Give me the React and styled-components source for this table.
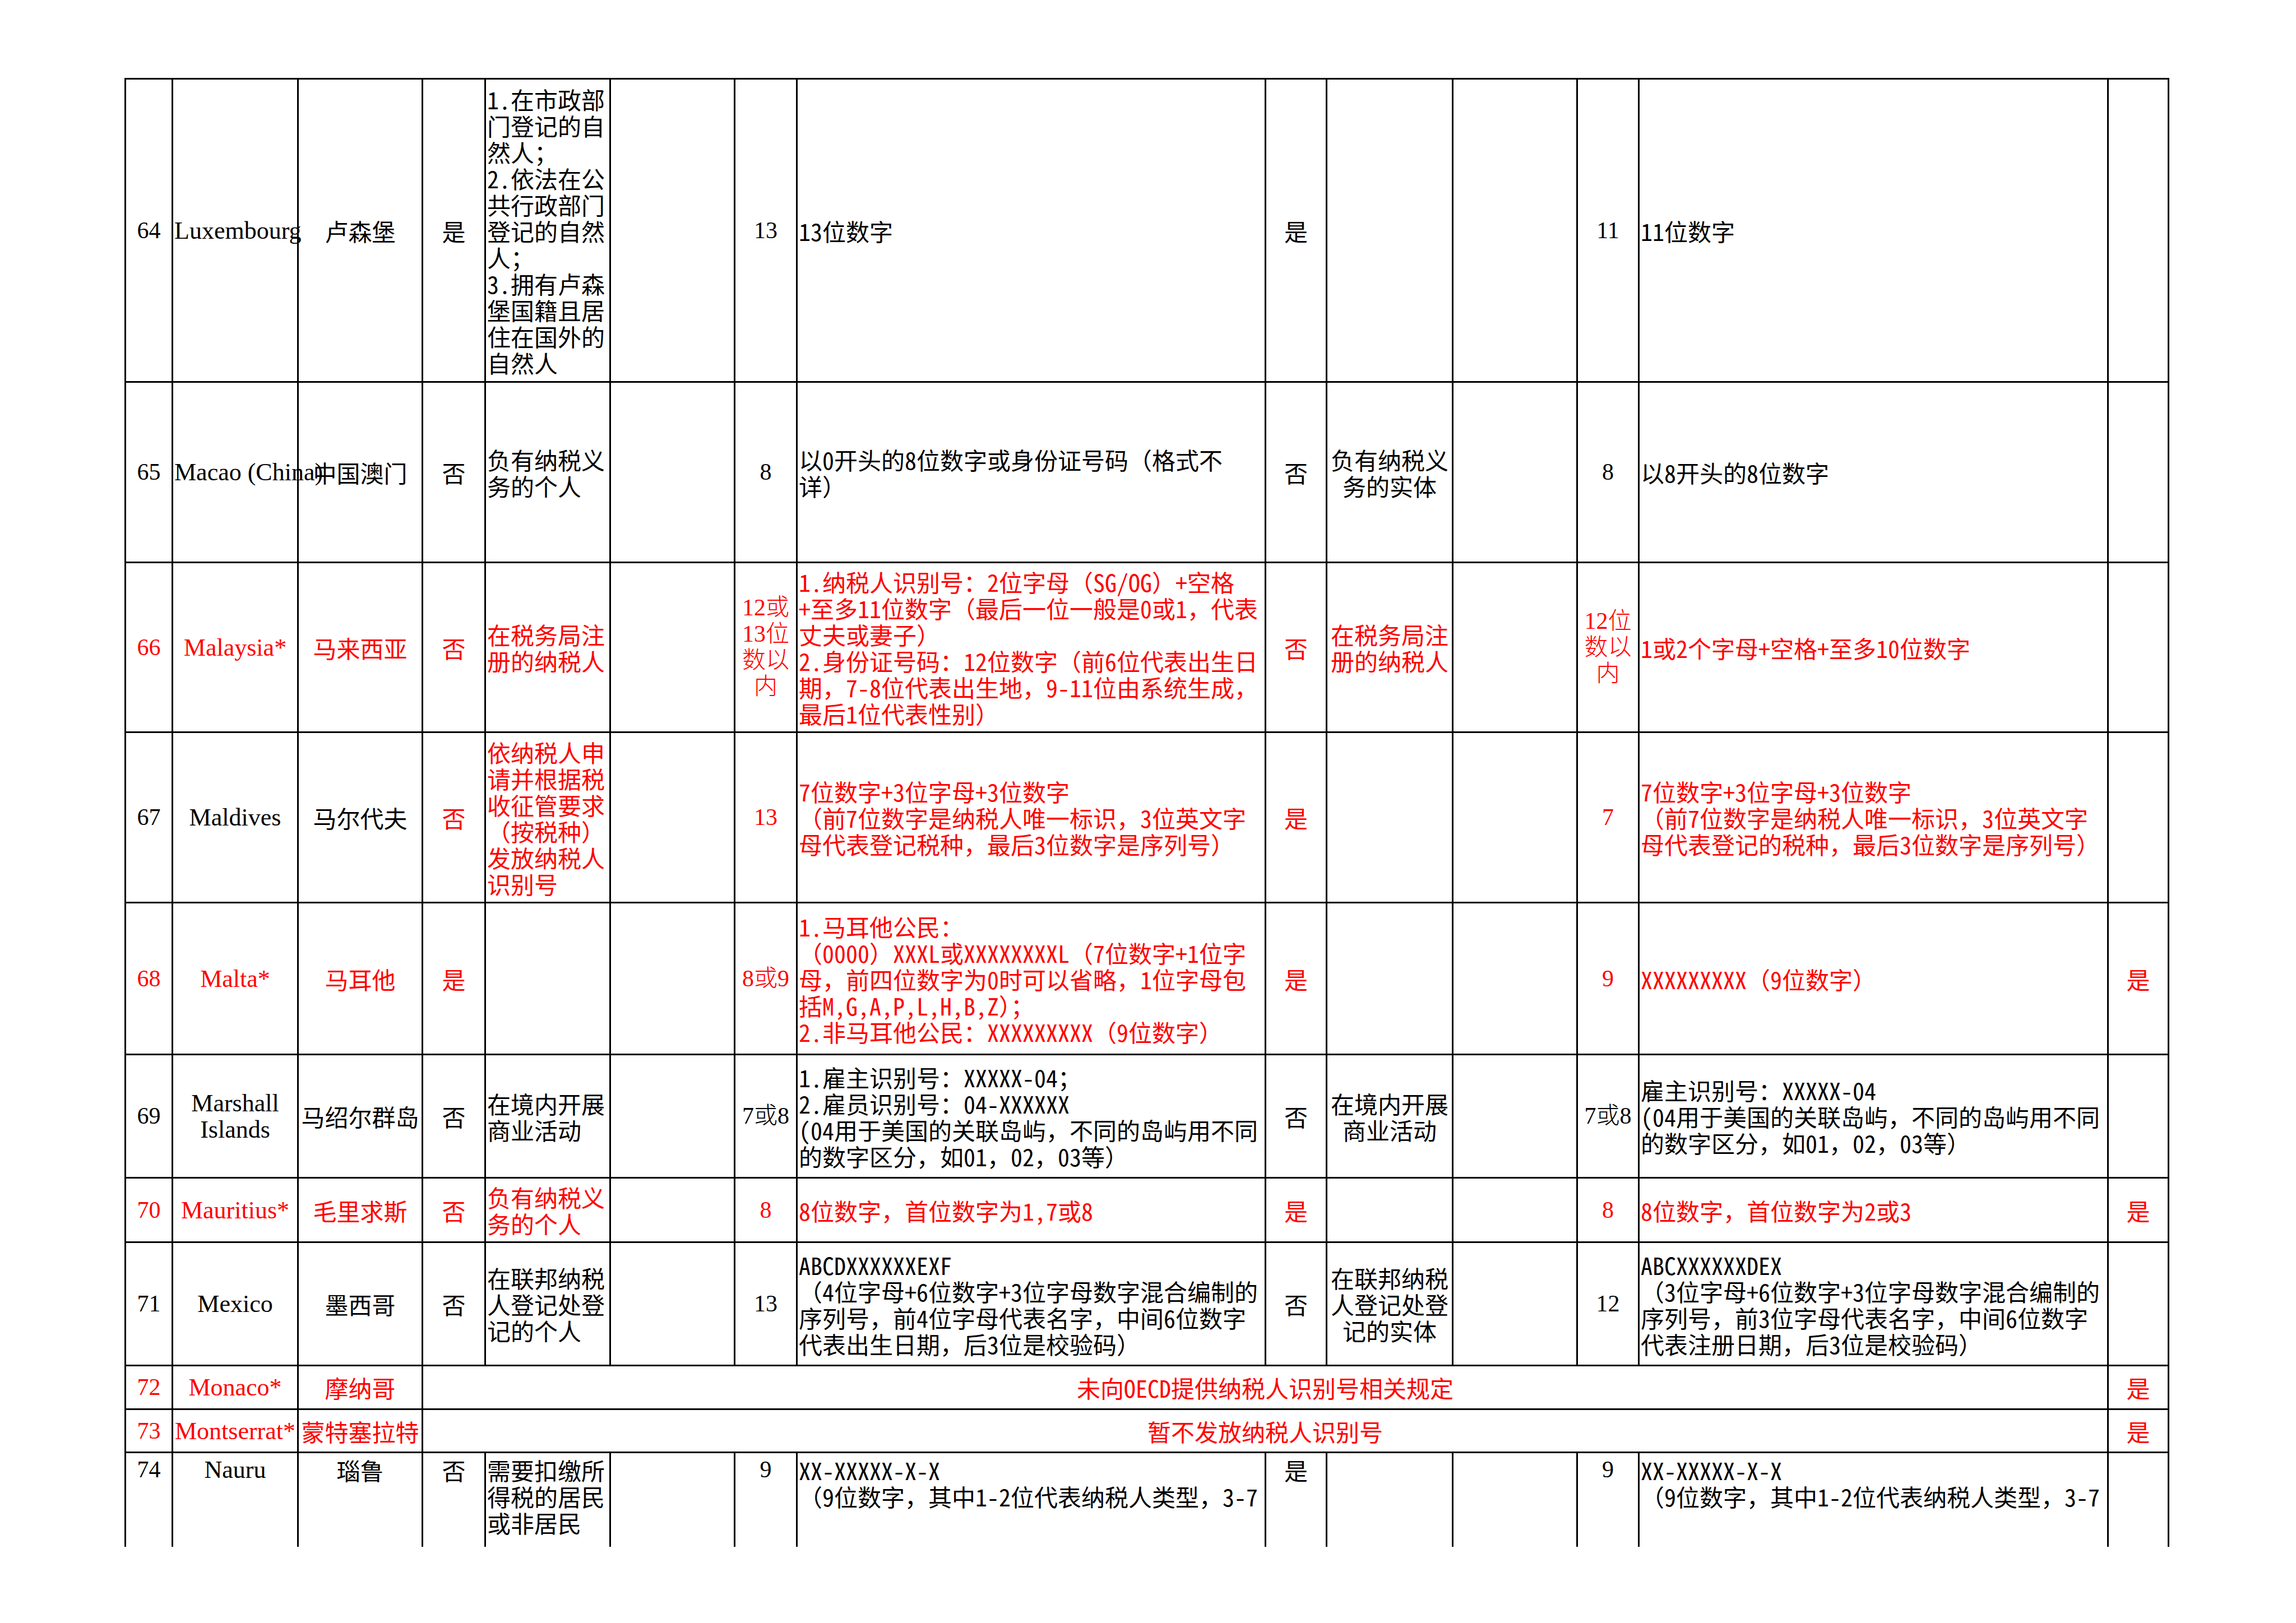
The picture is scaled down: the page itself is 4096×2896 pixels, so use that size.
import styled, { createGlobalStyle } from 'styled-components';

const RED = '#ff0000';
const CJK = '"Noto Sans Mono CJK SC", "Noto Sans CJK SC", sans-serif';
const LATIN = '"Liberation Serif", "Noto Sans CJK SC", serif';

// column widths taken from the printed sheet
const COLS = [84, 224, 222, 112, 223, 222, 111, 836, 109, 225, 222, 110, 837, 108];
const ALIGN = ['center', 'center', 'center', 'center', 'left', 'left', 'center', 'left', 'center', 'center', 'left', 'center', 'left', 'center'];
// row number and the two length columns print in a serif face
const SERIF_COLS = [0, 6, 11];

const rows = [
  {
    h: 541,
    cells: ['64', 'Luxembourg', '卢森堡', '是',
      '1.在市政部\n门登记的自\n然人；\n2.依法在公\n共行政部门\n登记的自然\n人；\n3.拥有卢森\n堡国籍且居\n住在国外的\n自然人',
      '', '13', '13位数字', '是', '', '', '11', '11位数字', ''],
  },
  {
    h: 322,
    cells: ['65', 'Macao\u00a0(China)', '中国澳门', '否', '负有纳税义\n务的个人', '', '8',
      '以0开头的8位数字或身份证号码（格式不\n详）', '否', '负有纳税义\n务的实体', '', '8', '以8开头的8位数字', ''],
  },
  {
    h: 303,
    red: 0,
    cells: ['66', 'Malaysia*', '马来西亚', '否', '在税务局注\n册的纳税人', '', '12或\n13位\n数以\n内',
      '1.纳税人识别号：2位字母（SG/OG）+空格\n+至多11位数字（最后一位一般是0或1，代表\n丈夫或妻子）\n2.身份证号码：12位数字（前6位代表出生日\n期，7-8位代表出生地，9-11位由系统生成，\n最后1位代表性别）',
      '否', '在税务局注\n册的纳税人', '', '12位\n数以\n内', '1或2个字母+空格+至多10位数字', ''],
  },
  {
    h: 304,
    red: 3,
    cells: ['67', 'Maldives', '马尔代夫', '否', '依纳税人申\n请并根据税\n收征管要求\n（按税种）\n发放纳税人\n识别号', '', '13',
      '7位数字+3位字母+3位数字\n（前7位数字是纳税人唯一标识，3位英文字\n母代表登记税种，最后3位数字是序列号）',
      '是', '', '', '7',
      '7位数字+3位字母+3位数字\n（前7位数字是纳税人唯一标识，3位英文字\n母代表登记的税种，最后3位数字是序列号）', ''],
  },
  {
    h: 271,
    red: 0,
    cells: ['68', 'Malta*', '马耳他', '是', '', '', '8或9',
      '1.马耳他公民：\n（0000）XXXL或XXXXXXXXL（7位数字+1位字\n母，前四位数字为0时可以省略，1位字母包\n括M,G,A,P,L,H,B,Z）；\n2.非马耳他公民：XXXXXXXXX（9位数字）',
      '是', '', '', '9', 'XXXXXXXXX（9位数字）', '是'],
  },
  {
    h: 220,
    cells: ['69', 'Marshall\nIslands', '马绍尔群岛', '否', '在境内开展\n商业活动', '', '7或8',
      '1.雇主识别号：XXXXX-04；\n2.雇员识别号：04-XXXXXX\n(04用于美国的关联岛屿，不同的岛屿用不同\n的数字区分，如01，02，03等）',
      '否', '在境内开展\n商业活动', '', '7或8',
      '雇主识别号：XXXXX-04\n(04用于美国的关联岛屿，不同的岛屿用不同\n的数字区分，如01，02，03等）', ''],
  },
  {
    h: 115,
    red: 0,
    cells: ['70', 'Mauritius*', '毛里求斯', '否', '负有纳税义\n务的个人', '', '8', '8位数字，首位数字为1,7或8',
      '是', '', '', '8', '8位数字，首位数字为2或3', '是'],
  },
  {
    h: 220,
    cells: ['71', 'Mexico', '墨西哥', '否', '在联邦纳税\n人登记处登\n记的个人', '', '13',
      'ABCDXXXXXXEXF\n（4位字母+6位数字+3位字母数字混合编制的\n序列号，前4位字母代表名字，中间6位数字\n代表出生日期，后3位是校验码）',
      '否', '在联邦纳税\n人登记处登\n记的实体', '', '12',
      'ABCXXXXXXDEX\n（3位字母+6位数字+3位字母数字混合编制的\n序列号，前3位字母代表名字，中间6位数字\n代表注册日期，后3位是校验码）', ''],
  },
  {
    h: 78,
    red: 0,
    merged: true,
    cells: ['72', 'Monaco*', '摩纳哥', '未向OECD提供纳税人识别号相关规定', '是'],
  },
  {
    h: 77,
    red: 0,
    merged: true,
    cells: ['73', 'Montserrat*', '蒙特塞拉特', '暂不发放纳税人识别号', '是'],
  },
  {
    h: 168,
    top: true,
    cells: ['74', 'Nauru', '瑙鲁', '否', '需要扣缴所\n得税的居民\n或非居民', '', '9',
      'XX-XXXXX-X-X\n（9位数字，其中1-2位代表纳税人类型，3-7',
      '是', '', '', '9', 'XX-XXXXX-X-X\n（9位数字，其中1-2位代表纳税人类型，3-7', ''],
  },
];

const GlobalStyle = createGlobalStyle`
  html, body {
    margin: 0;
    padding: 0;
    background: #fff;
  }
`;

const Page = styled.div`
  width: 4096px;
  height: 2896px;
  box-sizing: border-box;
  padding: 139px 0 0 222px;
  overflow: hidden;
  background: #fff;
`;

const Sheet = styled.table`
  border-collapse: collapse;
  table-layout: fixed;
  width: ${COLS.reduce((a, b) => a + b, 0)}px;
  font-family: ${CJK};
  font-size: 42px;
  font-weight: 300;
  line-height: 47px;
  color: #000;
`;

const Row = styled.tr`
  height: ${p => p.$h}px;
`;

const Cell = styled.td`
  border: 3px solid #000;
  border-bottom: ${p => (p.$open ? 'none' : '3px solid #000')};
  padding: ${p => (p.$top ? '6px 2px 0' : '0 2px')};
  font-family: ${p => (p.$serif ? LATIN : CJK)};
  text-align: ${p => p.$align};
  vertical-align: ${p => (p.$top ? 'top' : 'middle')};
  white-space: pre;
  overflow: visible;
  color: ${p => (p.$red ? RED : '#000')};
`;

const Country = styled(Cell)`
  font-family: ${LATIN};
  font-size: 44px;
  font-weight: 400;
`;

const Notice = styled(Cell)`
  text-align: center;
`;

function cellProps(row, col) {
  return {
    $align: ALIGN[col],
    $serif: SERIF_COLS.includes(col),
    $red: row.red !== undefined && col >= row.red,
    $top: row.top,
    $open: row.top,
  };
}

function renderCell(row, text, col) {
  const Tag = col === 1 ? Country : Cell;
  return (
    <Tag key={col} {...cellProps(row, col)}>
      {text}
    </Tag>
  );
}

export default function App() {
  return (
    <Page>
      <GlobalStyle />
      <Sheet>
        <colgroup>
          {COLS.map((w, i) => (
            <col key={i} style={{ width: w }} />
          ))}
        </colgroup>
        <tbody>
          {rows.map(row => (
            <Row key={row.cells[0]} $h={row.h}>
              {row.merged ? (
                <>
                  {row.cells.slice(0, 3).map((t, c) => renderCell(row, t, c))}
                  <Notice colSpan={10} {...cellProps(row, 3)}>
                    {row.cells[3]}
                  </Notice>
                  {renderCell(row, row.cells[4], 13)}
                </>
              ) : (
                row.cells.map((t, c) => renderCell(row, t, c))
              )}
            </Row>
          ))}
        </tbody>
      </Sheet>
    </Page>
  );
}
